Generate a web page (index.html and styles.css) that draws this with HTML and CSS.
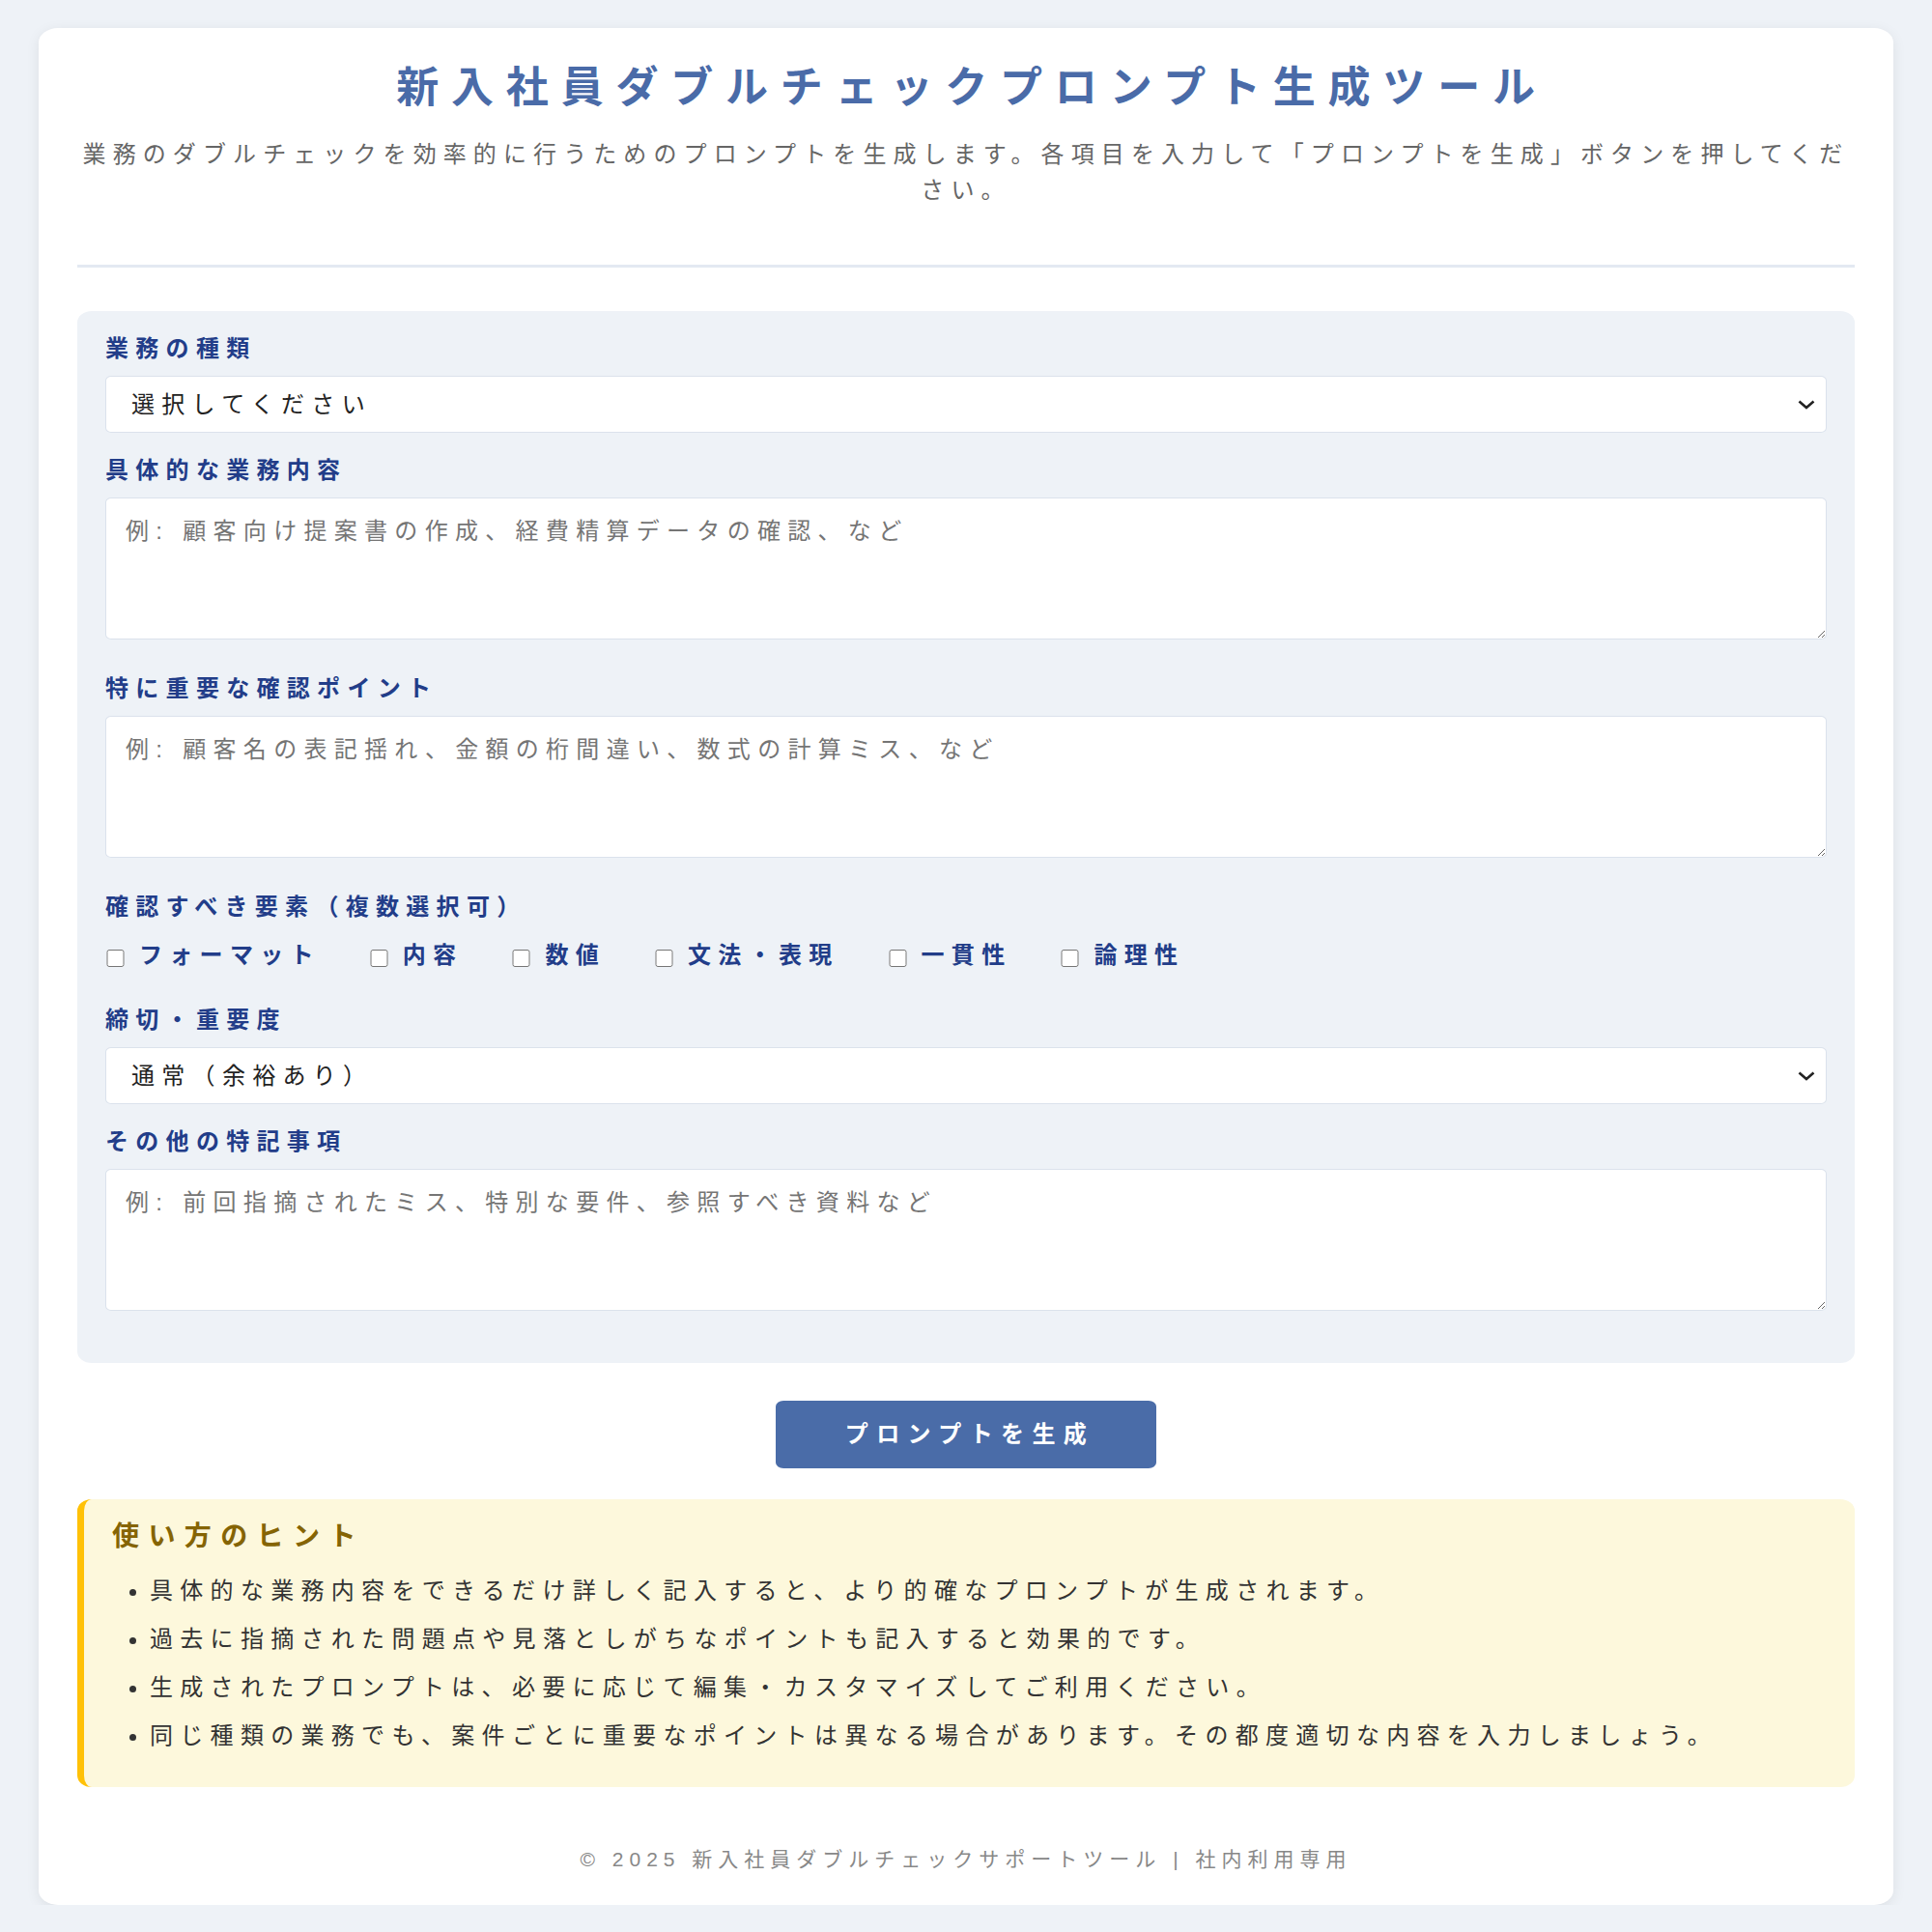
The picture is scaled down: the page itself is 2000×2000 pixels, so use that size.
FILE: index.html
```html
<!DOCTYPE html>
<html lang="ja">
<head>
    <meta charset="UTF-8">
    <meta name="viewport" content="width=device-width, initial-scale=1.0">
    <title>新入社員ダブルチェックプロンプト生成ツール</title>
    <link rel="stylesheet" href="styles.css">
</head>
<body>
    <div class="container">
        <header class="header">
            <h1>新入社員ダブルチェックプロンプト生成ツール</h1>
            <p class="lead">業務のダブルチェックを効率的に行うためのプロンプトを生成します。各項目を入力して「プロンプトを生成」ボタンを押してください。</p>
        </header>

        <div class="form-area">
            <div class="form-group">
                <label class="field-label" for="taskType">業務の種類</label>
                <select id="taskType">
                    <option value="">選択してください</option>
                    <option value="資料作成">資料作成</option>
                    <option value="データ入力">データ入力</option>
                    <option value="経費精算">経費精算</option>
                    <option value="メール送信">メール送信</option>
                    <option value="契約書確認">契約書確認</option>
                    <option value="その他">その他</option>
                </select>
            </div>

            <div class="form-group">
                <label class="field-label" for="taskDetail">具体的な業務内容</label>
                <textarea id="taskDetail" placeholder="例: 顧客向け提案書の作成、経費精算データの確認、など"></textarea>
            </div>

            <div class="form-group">
                <label class="field-label" for="keyPoints">特に重要な確認ポイント</label>
                <textarea id="keyPoints" placeholder="例: 顧客名の表記揺れ、金額の桁間違い、数式の計算ミス、など"></textarea>
            </div>

            <div class="form-group">
                <label class="field-label">確認すべき要素（複数選択可）</label>
                <div class="check-list">
                    <label class="check-item"><input type="checkbox" value="フォーマット">フォーマット</label>
                    <label class="check-item"><input type="checkbox" value="内容">内容</label>
                    <label class="check-item"><input type="checkbox" value="数値">数値</label>
                    <label class="check-item"><input type="checkbox" value="文法・表現">文法・表現</label>
                    <label class="check-item"><input type="checkbox" value="一貫性">一貫性</label>
                    <label class="check-item"><input type="checkbox" value="論理性">論理性</label>
                </div>
            </div>

            <div class="form-group">
                <label class="field-label" for="priority">締切・重要度</label>
                <select id="priority">
                    <option value="通常">通常（余裕あり）</option>
                    <option value="急ぎ">急ぎ（本日中）</option>
                    <option value="最優先">最優先（至急）</option>
                </select>
            </div>

            <div class="form-group">
                <label class="field-label" for="notes">その他の特記事項</label>
                <textarea id="notes" placeholder="例: 前回指摘されたミス、特別な要件、参照すべき資料など"></textarea>
            </div>
        </div>

        <div class="btn-wrap">
            <button class="generate-btn" onclick="generatePrompt()">プロンプトを生成</button>
        </div>

        <div class="result" id="result"></div>

        <div class="hints">
            <h3>使い方のヒント</h3>
            <ul>
                <li>具体的な業務内容をできるだけ詳しく記入すると、より的確なプロンプトが生成されます。</li>
                <li>過去に指摘された問題点や見落としがちなポイントも記入すると効果的です。</li>
                <li>生成されたプロンプトは、必要に応じて編集・カスタマイズしてご利用ください。</li>
                <li>同じ種類の業務でも、案件ごとに重要なポイントは異なる場合があります。その都度適切な内容を入力しましょう。</li>
            </ul>
        </div>

        <footer class="footer">© 2025 新入社員ダブルチェックサポートツール | 社内利用専用</footer>
    </div>

    <script>
        function generatePrompt() {
            let type = document.getElementById("taskType").value;
            let detail = document.getElementById("taskDetail").value;
            let points = document.getElementById("keyPoints").value;
            let priority = document.getElementById("priority").value;
            let notes = document.getElementById("notes").value;
            let checks = [];
            document.querySelectorAll(".check-item input:checked").forEach(function (c) {
                checks.push(c.value);
            });

            if (!type) {
                alert("業務の種類を選択してください。");
                return;
            }

            let text = "あなたは経験豊富な先輩社員です。以下の業務成果物をダブルチェックしてください。\n\n";
            text += "【業務の種類】" + type + "\n";
            if (detail) text += "【業務内容】" + detail + "\n";
            if (points) text += "【重要な確認ポイント】" + points + "\n";
            if (checks.length) text += "【確認すべき要素】" + checks.join("、") + "\n";
            text += "【締切・重要度】" + priority + "\n";
            if (notes) text += "【特記事項】" + notes + "\n";

            let box = document.getElementById("result");
            box.innerText = text;
            box.style.display = "block";
        }
    </script>
</body>
</html>
```

FILE: styles.css
```css
body {
    margin: 0;
    padding: 29px 40px 0;
    background-color: #eef2f7;
    font-family: "Liberation Sans", "Noto Sans CJK JP", sans-serif;
    font-size: 24px;
    letter-spacing: 7.3px;
    color: #333;
}
.container {
    background: white;
    padding: 35px 40px 32px;
    border-radius: 20px / 15px;
    box-shadow: 0 3px 14px rgba(0, 0, 0, 0.08);
}
.header {
    text-align: center;
    padding-bottom: 36px;
    border-bottom: 3px solid #e3e9f2;
    margin-bottom: 45px;
}
h1 {
    margin: 0;
    padding-left: 12px;
    font-size: 44px;
    line-height: 54px;
    letter-spacing: 12.8px;
    color: #4a6ba8;
}
.lead {
    margin: 23px 0;
    line-height: 37px;
    letter-spacing: 7.1px;
    color: #666;
}
.form-area {
    background: #eef2f7;
    border-radius: 15px / 12px;
    padding: 22px 29px 20px;
    margin-bottom: 39px;
}
.form-group {
    padding-bottom: 22px;
}
.field-label {
    display: block;
    font-weight: bold;
    line-height: 34px;
    margin-bottom: 11px;
    color: #223d89;
}
select, textarea {
    width: 100%;
    box-sizing: border-box;
    font-family: inherit;
    font-size: 24px;
    letter-spacing: 7.3px;
    background-color: white;
    border: 1px solid #dbe2ec;
    border-radius: 6px / 5px;
}
select {
    appearance: none;
    height: 59px;
    padding: 0 50px 0 26px;
    color: #222;
    background-image: url("data:image/svg+xml,%3Csvg xmlns='http://www.w3.org/2000/svg' width='18' height='10' viewBox='0 0 18 10'%3E%3Cpath d='M1.5 1.5 9 8 16.5 1.5' fill='none' stroke='%23222' stroke-width='2.6'/%3E%3C/svg%3E");
    background-repeat: no-repeat;
    background-position: right 11px center;
}
textarea {
    display: block;
    height: 147px;
    padding: 14px 20px;
    margin: 0 0 12px;
    resize: vertical;
    color: #333;
}
textarea::placeholder {
    color: #757575;
}
.check-list {
    display: flex;
    flex-wrap: wrap;
    gap: 50px;
    padding: 5px 0 11px;
    line-height: 34px;
}
.check-item {
    display: flex;
    align-items: center;
    gap: 14px;
    font-weight: bold;
    color: #223d89;
    cursor: pointer;
}
.check-item input {
    width: 21px;
    height: 18px;
    margin: 5px 0 0;
}
.btn-wrap {
    margin-bottom: 32px;
}
.generate-btn {
    display: block;
    margin: 0 auto;
    padding: 18px 64px 18px 72px;
    background-color: #4a6ca8;
    color: white;
    border: none;
    border-radius: 8px / 6px;
    font-family: inherit;
    font-size: 24px;
    font-weight: bold;
    letter-spacing: 8.4px;
    line-height: 34px;
    cursor: pointer;
}
.generate-btn:hover {
    background-color: #3b5a90;
}
.result {
    display: none;
    white-space: pre-wrap;
    background: #f7f9fc;
    border: 1px solid #dbe2ec;
    border-radius: 6px;
    padding: 20px 29px;
    margin-bottom: 32px;
    line-height: 37px;
}
.hints {
    background: #fdf8dc;
    border-left: 7px solid #ffc107;
    border-radius: 15px / 12px;
    padding: 21px 29px 22px;
}
.hints h3 {
    margin: 0 0 19px;
    font-size: 28px;
    line-height: 36px;
    letter-spacing: 9.4px;
    color: #856404;
}
.hints ul {
    margin: 0;
    padding-left: 39px;
}
.hints li {
    line-height: 37px;
    margin-bottom: 13px;
}
.footer {
    margin-top: 60px;
    text-align: center;
    font-size: 21px;
    line-height: 30px;
    letter-spacing: 6px;
    color: #888;
}
```
